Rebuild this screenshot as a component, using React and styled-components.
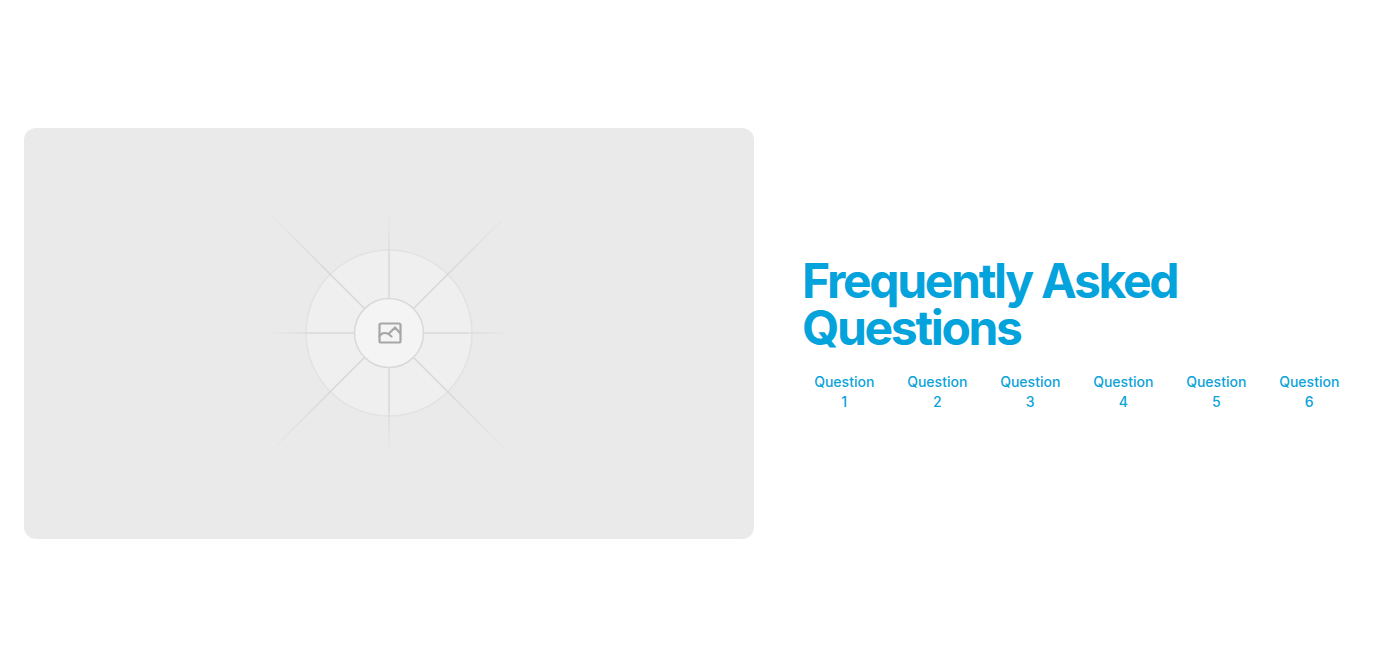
import React from "react";
import styled, { createGlobalStyle } from "styled-components";

const Global = createGlobalStyle`
  * { box-sizing: border-box; }
  html, body { margin: 0; padding: 0; background: #fff; }
  body { font-family: Inter, "Liberation Sans", sans-serif; }
`;
const Page = styled.main`
  height: 667px;
  padding: 0 24px;
  display: grid;
  grid-template-columns: 730px 550px;
  column-gap: 48px;
  align-items: center;
  overflow: hidden;
`;
const Media = styled.div`
  height: 411px;
  border-radius: 12px;
  background: #eaeaea;
  display: flex;
  align-items: center;
  justify-content: center;
`;
const Panel = styled.section`
  display: flex;
  flex-direction: column;
  gap: 21px;
  padding-top: 1px;
  color: #05a3dc;
`;
const Title = styled.h1`
  margin: 0;
  font-size: 48px;
  line-height: 47px;
  font-weight: 700;
  letter-spacing: -0.048em;
`;
const Tabs = styled.div`
  display: grid;
  grid-template-columns: repeat(6, 85px);
  column-gap: 8px;
  margin-left: -0.25px;
`;
const Tab = styled.button`
  border: 0;
  background: none;
  padding: 0 12px;
  font: 500 14px/20px Inter, "Liberation Sans", sans-serif;
  color: #0ba3d9;
  text-align: center;
`;
const Art = styled.svg`
  display: block;
  filter: blur(0.4px);
`;

const Placeholder = () => {
  const cx = 120;
  const cy = 119;
  const spokes = [0, 45, 90, 135, 180, 225, 270, 315];
  return (
    <Art width="240" height="240" viewBox="0 0 240 240" fill="none">
      <defs>
        <radialGradient id="fade" gradientUnits="userSpaceOnUse" cx={cx} cy={cy} r="119">
          <stop offset="0.65" stopColor="#d9d9d9" />
          <stop offset="1" stopColor="#d9d9d9" stopOpacity="0" />
        </radialGradient>
        <radialGradient id="fadeDiag" gradientUnits="userSpaceOnUse" cx={cx} cy={cy} r="168">
          <stop offset="0.5" stopColor="#d7d7d7" />
          <stop offset="1" stopColor="#d7d7d7" stopOpacity="0" />
        </radialGradient>
      </defs>
      <circle cx={cx} cy={cy} r="83" fill="#efefef" stroke="#e2e2e2" strokeWidth="1.5" />
      {spokes.map((a) => {
        const diag = a % 90 !== 0;
        const r = diag ? 168 : 119;
        const t = (a * Math.PI) / 180;
        return (
          <line
            key={a}
            x1={cx + 34 * Math.cos(t)}
            y1={cy + 34 * Math.sin(t)}
            x2={cx + r * Math.cos(t)}
            y2={cy + r * Math.sin(t)}
            stroke={diag ? "url(#fadeDiag)" : "url(#fade)"}
            strokeWidth="1.5"
          />
        );
      })}
      <circle cx={cx} cy={cy} r="34.5" fill="#f4f4f4" stroke="#d9d9d9" strokeWidth="1.5" />
      <g stroke="#a6a6a6" strokeWidth="2.2" strokeLinejoin="round" strokeLinecap="round">
        <rect x="110.5" y="109.5" width="21" height="19" rx="1.5" />
        <path d="M110.5 122 Q112.5 119 115.5 119 Q117.5 119 119.5 120 L126 113.5 L131 119" />
        <path d="M119.5 120 L122.5 122.5" />
      </g>
    </Art>
  );
};

export default function App() {
  return (
    <>
      <Global />
      <Page>
        <Media>
          <Placeholder />
        </Media>
        <Panel>
          <Title>Frequently Asked Questions</Title>
          <Tabs>
            {[1, 2, 3, 4, 5, 6].map((n) => (
              <Tab key={n}>Question {n}</Tab>
            ))}
          </Tabs>
        </Panel>
      </Page>
    </>
  );
}
